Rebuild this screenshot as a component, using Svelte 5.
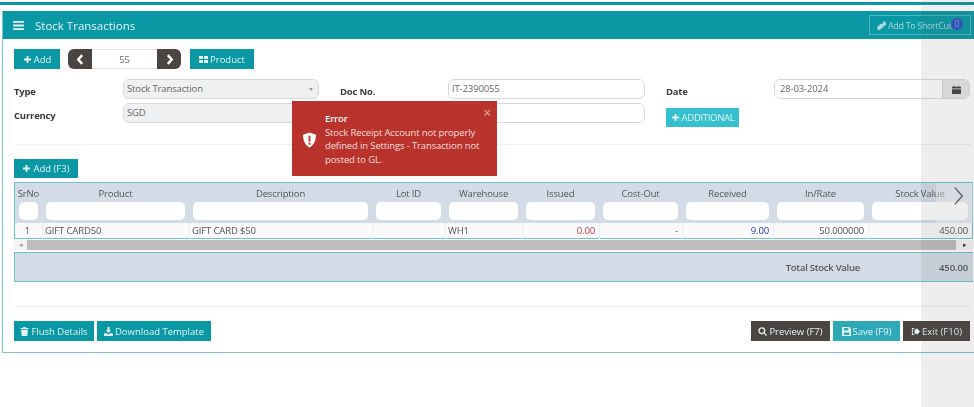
<script>
  const columns = [
    { label: 'SrNo', value: '1', align: 'center' },
    { label: 'Product', value: 'GIFT CARD50' },
    { label: 'Description', value: 'GIFT CARD $50' },
    { label: 'Lot ID', value: '' },
    { label: 'Warehouse', value: 'WH1' },
    { label: 'Issued', value: '0.00', align: 'right', tone: 'red' },
    { label: 'Cost-Out', value: '-', align: 'right' },
    { label: 'Received', value: '9.00', align: 'right', tone: 'blue' },
    { label: 'In/Rate', value: '50.000000', align: 'right' },
    { label: 'Stock Value', value: '450.00', align: 'right' }
  ];
</script>

<div class="page">
  <div class="topline"></div>
  <section class="card">
    <header class="head">
      <svg class="menu" viewBox="0 0 12 10" aria-hidden="true"><path d="M0 0h12v2H0zM0 4h12v2H0zM0 8h12v2H0z" /></svg>
      <h1>Stock Transactions</h1>
      <button class="shortcut">
        <svg viewBox="0 0 12 12" aria-hidden="true"><path d="M1 8l4-4h3l-1-1 2-2 2 2v2L9 7 8 6v2l-4 3H2z" /></svg>
        <span class="shortcut-text">Add To ShortCut</span>
        <span class="count">0</span>
      </button>
    </header>

    <div class="body">
      <div class="toolbar">
        <button class="btn">
          <svg viewBox="0 0 10 10" aria-hidden="true"><path d="M4 1h2v3h3v2H6v3H4V6H1V4h3z" /></svg>
          Add
        </button>
        <div class="pager">
          <span class="arrow"><svg viewBox="0 0 10 10" aria-hidden="true"><path d="M6.500 1L3 5l3.500 4" /></svg></span>
          <span class="num">55</span>
          <span class="arrow"><svg viewBox="0 0 10 10" aria-hidden="true"><path d="M3.500 1L7 5 3.500 9" /></svg></span>
        </div>
        <button class="btn product">
          <svg viewBox="0 0 10 10" aria-hidden="true"><path d="M0 1h4.400v3.400H0zM5.600 1H10v3.400H5.600zM0 5.600h4.400V9H0zM5.600 5.600H10V9H5.600z" /></svg>
          Product
        </button>
      </div>

      <div class="form">
        <span class="lbl">Type</span>
        <div class="field select">Stock Transaction<i class="caret"></i></div>
        <span class="lbl inset">Doc No.</span>
        <div class="field plain">IT-2390055</div>
        <span class="lbl inset">Date</span>
        <div class="datebox">
          <span>28-03-2024</span>
          <span class="cal">
            <svg viewBox="0 0 10 10" aria-hidden="true"><path d="M0 2h2V.800h1V2h4V.800h1V2h2v2H0zM0 4.800h10V10H0z" /></svg>
          </span>
        </div>

        <span class="lbl">Currency</span>
        <div class="field select">SGD</div>
        <span></span>
        <div class="field plain"></div>
        <div class="inset addcell">
          <button class="btn additional">
            <svg viewBox="0 0 10 10" aria-hidden="true"><path d="M4 1h2v3h3v2H6v3H4V6H1V4h3z" /></svg>
            ADDITIONAL
          </button>
        </div>
      </div>

      <hr class="rule first" />

      <button class="btn addline">
        <svg viewBox="0 0 10 10" aria-hidden="true"><path d="M4 1h2v3h3v2H6v3H4V6H1V4h3z" /></svg>
        Add (F3)
      </button>

      <div class="table">
        <div class="cols heads">
          {#each columns as col}
            <div class="th">
              <span>{col.label}</span>
              <i class="filter"></i>
            </div>
          {/each}
        </div>
        <div class="cols row">
          {#each columns as col}
            <div class="td {col.align ?? ''} {col.tone ?? ''}">{col.value}</div>
          {/each}
        </div>
      </div>

      <div class="hscroll">
        <span class="end">◂</span>
        <span class="thumb"></span>
        <span class="end last">▸</span>
      </div>

      <div class="total">
        <b>Total Stock Value</b>
        <b class="amount">450.00</b>
      </div>

      <hr class="rule second" />

      <div class="actions">
        <button class="btn">
          <svg viewBox="0 0 10 10" aria-hidden="true"><path d="M3.500 0h3v1H9.500v1.300h-9V1h3zM1.200 3h7.600L8.200 10H1.800z" /></svg>
          Flush Details
        </button>
        <button class="btn">
          <svg viewBox="0 0 10 10" aria-hidden="true"><path d="M3.800 0h2.400v3.500H8L5 6.800 2 3.500h1.800zM0 7h3l2 1.400L7 7h3v3H0z" /></svg>
          Download Template
        </button>
        <span class="spacer"></span>
        <button class="btn dark">
          <svg viewBox="0 0 10 10" aria-hidden="true"><circle cx="4.200" cy="4.200" r="3.200" fill="none" stroke="currentColor" stroke-width="1.500" /><path d="M6.400 6.900l.7-.7L10 8.900 8.900 10z" /></svg>
          Preview (F7)
        </button>
        <button class="btn save">
          <svg viewBox="0 0 10 10" aria-hidden="true"><path d="M0 0h8l2 2v8H0zM2 1v3h5V1zM2 6v3h6V6z" fill-rule="evenodd" /></svg>
          Save (F9)
        </button>
        <button class="btn dark">
          <svg viewBox="0 0 10 10" aria-hidden="true"><path d="M4 1H1v8h3V8H2V2h2zM5 2.500h1.500V1L10 5 6.500 9V7.500H4v-5z" /></svg>
          Exit (F10)
        </button>
      </div>
    </div>
  </section>

  <div class="pagecue">
    <svg viewBox="0 0 14 24" aria-hidden="true"><path d="M2 2l9 10-9 10" /></svg>
  </div>
  <div class="shade"></div>

  <aside class="toast">
    <svg class="shield" viewBox="0 0 14 16" aria-hidden="true">
      <path fill-rule="evenodd" d="M7 0l7 2.300c0 6-2 11-7 13.700C2 13.300 0 8.300 0 2.300zM6 3.500v6.500h2V3.500zM6 11v2h2v-2z" />
    </svg>
    <div class="msg">
      <strong>Error</strong>
      <p>Stock Receipt Account not properly defined in Settings - Transaction not posted to GL.</p>
    </div>
    <span class="close">×</span>
  </aside>
</div>

<style>
  :global(body) {
    margin: 0;
    background: #fff;
  }

  .page {
    position: relative;
    width: 974px;
    height: 407px;
    overflow: hidden;
    padding-top: 2px;
    box-sizing: border-box;
    font-family: 'Open Sans', 'Liberation Sans', sans-serif;
    font-size: 9.5px;
    letter-spacing: -0.14px;
    color: #555;
    filter: blur(0.3px);
  }

  .topline {
    height: 3px;
    background: #0a98a4;
  }

  .card {
    margin: 6px 0 0 2px;
    height: 342px;
    box-sizing: border-box;
    border: 1px solid #7cc6c8;
    border-right: 0;
    border-top: 0;
  }

  .head {
    height: 28px;
    background: #0a98a4;
    display: flex;
    align-items: center;
    padding: 0 3px 0 10px;
    color: #e4f3f4;
  }

  .menu {
    width: 11px;
    height: 9px;
    fill: #e8f5f6;
  }

  h1 {
    margin: 0 0 0 11px;
    font-size: 11.5px;
    font-weight: 400;
    flex: 1;
    letter-spacing: 0;
  }

  .shortcut {
    position: relative;
    display: flex;
    align-items: center;
    gap: 1px;
    width: 102px;
    height: 20px;
    padding: 0 0 0 6px;
    background: transparent;
    border: 1px solid #4eb5bd;
    color: #a9d9dd;
    font: inherit;
    font-size: 9px;
    white-space: nowrap;
  }

  .shortcut svg {
    width: 11px;
    height: 11px;
    fill: #a9d9dd;
    flex: none;
  }

  .shortcut-text {
    letter-spacing: -0.35px;
  }

  .count {
    position: absolute;
    right: 7px;
    top: 2px;
    width: 12px;
    height: 12px;
    border-radius: 50%;
    background: #2f55c4;
    color: #7fa0e0;
    text-align: center;
    line-height: 12px;
    font-size: 8.5px;
  }

  .body {
    padding: 10px 3px 0 11px;
  }

  .btn {
    display: inline-flex;
    align-items: center;
    justify-content: center;
    gap: 2px;
    height: 20px;
    padding: 0 5px;
    border: 0;
    background: #0a98a4;
    color: #e4f3f4;
    font: inherit;
    white-space: nowrap;
    box-sizing: border-box;
  }

  .btn svg {
    width: 9px;
    height: 9px;
    fill: currentColor;
    flex: none;
  }

  .toolbar {
    display: flex;
    align-items: center;
    gap: 8px;
  }

  .toolbar .btn:first-child {
    width: 46px;
  }

  .product {
    width: 64px;
    margin-left: 1px;
  }

  .pager {
    display: flex;
    width: 113px;
    height: 20px;
    border-radius: 6px;
    overflow: hidden;
    background: #fff;
    box-shadow: inset 0 0 0 1px #e6e6e6;
  }

  .arrow {
    width: 24px;
    background: #4a4442;
    display: flex;
    align-items: center;
    justify-content: center;
  }

  .arrow svg {
    width: 11px;
    height: 11px;
    fill: none;
    stroke: #fff;
    stroke-width: 2.200;
  }

  .num {
    flex: 1;
    text-align: center;
    line-height: 21px;
    color: #666;
  }

  .form {
    display: grid;
    grid-template-columns: 109px 196px 129px 197px 129px 196px;
    grid-template-rows: 20px 20px;
    row-gap: 4px;
    margin-top: 10px;
  }

  .lbl {
    font-weight: 700;
    color: #3a3a3a;
    font-size: 9.5px;
    letter-spacing: -0.2px;
    align-self: center;
    margin-top: 5px;
    white-space: nowrap;
  }

  .inset {
    padding-left: 21px;
  }

  .field {
    box-sizing: border-box;
    border: 1px solid #d5d9dc;
    border-radius: 6px;
    padding: 0 3px;
    line-height: 18px;
    color: #666;
    white-space: nowrap;
    position: relative;
  }

  .select {
    background: #eef0f2;
  }

  .plain {
    background: #fff;
  }

  .caret {
    position: absolute;
    right: 5px;
    top: 8px;
    border: 2.500px solid transparent;
    border-top: 3px solid #999;
    border-bottom: 0;
  }

  .datebox {
    display: flex;
    justify-content: space-between;
    box-sizing: border-box;
    border: 1px solid #d5d9dc;
    border-radius: 6px;
    overflow: hidden;
    line-height: 18px;
    padding-left: 5px;
    color: #666;
  }

  .cal {
    width: 26px;
    background: #e4e6e8;
    border-left: 1px solid #d5d9dc;
    display: flex;
    align-items: center;
    justify-content: center;
  }

  .cal svg {
    width: 9px;
    height: 9px;
    fill: #444;
  }

  .addcell {
    padding-top: 5px;
  }

  .additional {
    width: 73px;
    height: 19px;
    padding: 0;
    background: #35c0d0;
    font-size: 9.5px;
    letter-spacing: -0.3px;
  }

  .rule {
    border: 0;
    height: 1px;
    margin: 0;
    background: #efefef;
  }

  .rule.first {
    margin-top: 21px;
  }

  .addline {
    width: 64px;
    height: 19px;
    margin-top: 14px;
    display: flex;
  }

  .table {
    margin: 4px -2px 0 0;
    border: 1px solid #6fc4c8;
    background: #d3dce6;
  }

  .cols {
    display: grid;
    grid-template-columns: 27px 147px 183px 73px 77px 77px 83px 91px 95px 1fr;
  }

  .heads {
    height: 40px;
  }

  .th {
    display: flex;
    flex-direction: column;
    align-items: center;
    padding: 3px 4px 0;
    color: #555;
    font-size: 9.5px;
    line-height: 16px;
    white-space: nowrap;
  }

  .filter {
    display: block;
    align-self: stretch;
    height: 18px;
    border-radius: 5px;
    background: #fff;
  }

  .row {
    height: 15px;
    background: #fafafa;
  }

  .td {
    padding: 0 4px 0 2px;
    line-height: 16px;
    border-left: 1px solid #eceeee;
    color: #555;
    white-space: nowrap;
    box-sizing: border-box;
  }

  .td:first-child {
    border-left: 0;
  }

  .center {
    text-align: center;
  }

  .right {
    text-align: right;
  }

  .red {
    color: #d2304e;
  }

  .blue {
    color: #2b35b8;
  }

  .hscroll {
    display: flex;
    align-items: center;
    height: 10px;
    margin: 1px -2px 0 0;
    font-size: 7px;
    color: #999;
    background: #f3f3f3;
  }

  .end {
    width: 13px;
    text-align: center;
    line-height: 10px;
  }

  .end.last {
    width: 17px;
    color: #333;
  }

  .thumb {
    flex: 1;
    height: 100%;
    background: #bdbdbd;
  }

  .total {
    display: flex;
    justify-content: flex-end;
    align-items: center;
    height: 30px;
    margin: 2px -2px 0 0;
    box-sizing: border-box;
    border: 1px solid #6fc4c8;
    border-width: 1px 0 1px 1px;
    background: #d3dce6;
    color: #555;
    font-size: 9.5px;
    padding-right: 5px;
  }

  .amount {
    width: 78px;
    text-align: right;
    font-weight: 600;
  }

  .total b:first-child {
    margin-right: 30px;
    font-weight: 600;
    letter-spacing: -0.25px;
  }

  .rule.second {
    margin-top: 24px;
  }

  .actions {
    display: flex;
    gap: 3px;
    margin-top: 14px;
    padding-right: 1px;
  }

  .actions .btn:nth-child(1) {
    width: 80px;
  }

  .actions .btn:nth-child(2) {
    width: 114px;
  }

  .spacer {
    flex: 1;
  }

  .dark {
    width: 79px;
    background: #4a4442;
  }

  .actions .dark:last-child {
    width: 67px;
  }

  .save {
    width: 67px;
    background: #2fa8b8;
  }

  .pagecue {
    position: absolute;
    left: 936px;
    top: 183px;
    width: 38px;
    height: 40px;
    box-sizing: border-box;
    padding: 3px 0 0 16px;
    background: rgba(255, 255, 255, 0.4);
  }

  .pagecue svg {
    display: block;
    width: 14px;
    height: 20px;
    fill: none;
    stroke: #555;
    stroke-width: 1.5;
  }

  .shade {
    position: absolute;
    left: 921px;
    top: 0;
    right: 0;
    bottom: 0;
    background: rgba(90, 90, 90, 0.1);
  }

  .toast {
    position: absolute;
    left: 292px;
    top: 101px;
    width: 205px;
    height: 75px;
    display: flex;
    background: #b9322c;
    color: #f6dedc;
    font-size: 9.5px;
    box-sizing: border-box;
    padding: 11px 6px 0 11px;
  }

  .shield {
    width: 13px;
    height: 16px;
    margin-top: 20px;
    fill: #fff;
    flex: none;
  }

  .msg {
    margin-left: 9px;
    line-height: 13.5px;
  }

  .msg strong {
    display: block;
    color: #fff;
    font-weight: 600;
  }

  .msg p {
    margin: 0;
  }

  .close {
    position: absolute;
    right: 6px;
    top: 4px;
    font-size: 14px;
    line-height: 16px;
    color: #e2a9a5;
  }
</style>
